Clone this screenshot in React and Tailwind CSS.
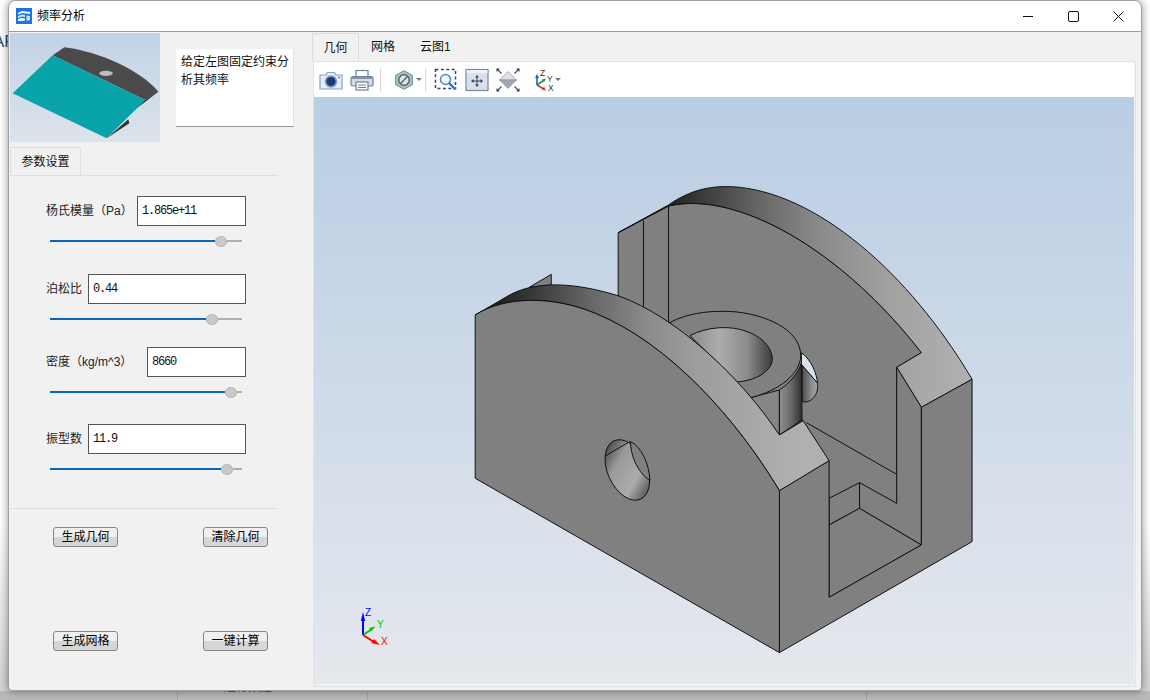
const cjk = "font-['Liberation_Sans','Noto_Sans_CJK_SC',sans-serif]";

const FIELDS = [
  { label: "杨氏模量（Pa）", value: "1.865e+11", input: "w-[109px]", fill: "w-[165px]", row: "mt-[20px]" },
  { label: "泊松比", value: "0.44", input: "w-[158px]", fill: "w-[156px]", row: "mt-[27px]" },
  { label: "密度（kg/m^3）", value: "8660", input: "w-[99px]", fill: "w-[175px]", row: "mt-[22px]" },
  { label: "振型数", value: "11.9", input: "w-[158px]", fill: "w-[171px]", row: "mt-[26px]" },
];

function Field({ label, value, input, fill, row }) {
  return (
    <div className={`${row} ml-[36px] w-[200px]`}>
      <div className="flex h-[30px] items-center justify-between">
        <span className="text-[12px] text-[#222]">{label}</span>
        <div className={`${input} flex h-[30px] items-center border border-[#555] bg-white pl-[4px] font-['Liberation_Mono',monospace] text-[12px] tracking-[-1.2px] text-[#111]`}>
          {value}
        </div>
      </div>
      <div className="ml-[4px] mt-[9px] flex h-[12px] w-[192px] items-center">
        <div className={`${fill} h-[2px] bg-[#0a67b5]`} />
        <div className="h-[11px] w-[12px] shrink-0 rounded-full border border-[#b4b4b4] bg-[#c9c9c9]" />
        <div className="h-[2px] flex-1 bg-[#b0b0b0]" />
      </div>
    </div>
  );
}

function PushButton({ children }) {
  return (
    <button className="h-[20px] w-[65px] rounded-[3px] border border-[#858585] bg-[linear-gradient(#f0f0f0_50%,#d6d6d6_50%)] text-center text-[12px] leading-[19px] text-black">
      {children}
    </button>
  );
}

function Thumbnail() {
  return (
    <svg viewBox="30 9 450 327" className="h-[109px] w-[150px] shrink-0">
      <defs>
        <linearGradient id="thumbSky" x1="0" y1="0" x2="0" y2="1">
          <stop offset="0" stopColor="#c2d3e6" />
          <stop offset="1" stopColor="#dce3ec" />
        </linearGradient>
      </defs>
      <rect x="30" y="9" width="450" height="327" fill="url(#thumbSky)" />
      <path d="M158 76 L193 52 C300 66 420 120 475 185 L436 210 Z" fill="#4a4a4a" />
      <path d="M38 190 L158 76 L436 210 L320 325 Z" fill="#08a4a9" />
      <ellipse cx="318" cy="130" rx="20" ry="8" fill="#bdbdbd" />
      <path d="M436 210 L475 185 L410 235 Z" fill="#222" />
      <path d="M320 325 L385 268 L388 280 Z" fill="#333" />
    </svg>
  );
}

function AppIcon() {
  return (
    <svg viewBox="0 0 16 16" className="h-[16px] w-[16px] shrink-0">
      <rect width="16" height="16" fill="#1a73e8" />
      <path d="M2 5 L6 3 L14 4 L14 6 L6 5 L2 6.5 Z" fill="#fff" />
      <path d="M2 8 L6 6.5 L9 7 L9 9 L6 8.5 L2 10 Z" fill="#dbe9fb" />
      <path d="M2 11 L6 10 L9 10.5 L9 12.5 L6 13 L2 13 Z" fill="#fff" />
      <path d="M10.5 7.5 L14 8 L14 12 L10.5 13 Z" fill="#cfe1fa" />
    </svg>
  );
}

function WindowButton({ children }) {
  return <div className="flex h-full w-[45px] items-center justify-center">{children}</div>;
}

function Camera() {
  return (
    <svg viewBox="0 0 24 24" className="h-[24px] w-[24px]">
      <path d="M1 7 H7 L8.5 4.5 H15.5 L17 7 H23 V21 H1 Z" fill="#e6edf6" stroke="#86a2c4" strokeWidth="1.2" strokeLinejoin="round" />
      <circle cx="12" cy="13.5" r="6.2" fill="#7b9cc4" />
      <circle cx="12" cy="13.5" r="4.6" fill="#1c3b75" />
      <circle cx="20" cy="9.5" r="0.9" fill="#5c7aa3" />
    </svg>
  );
}

function Printer() {
  return (
    <svg viewBox="0 0 24 24" className="h-[24px] w-[24px]">
      <rect x="6" y="2.5" width="12" height="7" fill="#fff" stroke="#6f8098" strokeWidth="1.2" />
      <rect x="1" y="8.5" width="22" height="9.5" rx="2" fill="#d5dce6" stroke="#6f8098" strokeWidth="1.2" />
      <rect x="1.6" y="9" width="20.8" height="2" fill="#8393a8" />
      <rect x="6" y="14" width="12" height="8" fill="#fff" stroke="#6f8098" strokeWidth="1.2" />
      <path d="M8 17 H16 M8 19.5 H16" stroke="#6f8098" strokeWidth="1" />
    </svg>
  );
}

function HexIcon() {
  return (
    <svg viewBox="0 0 18 20" className="h-[20px] w-[18px]">
      <path d="M9 0.7 L17.3 5.3 V14.7 L9 19.3 L0.7 14.7 V5.3 Z" fill="#a8c1c6" stroke="#6e8d93" />
      <circle cx="9" cy="10" r="5.2" fill="#dfe8ea" stroke="#55626a" strokeWidth="1.4" />
      <path d="M5.5 13.5 L12.5 6.5" stroke="#55626a" strokeWidth="1.4" />
    </svg>
  );
}

function ZoomBox() {
  return (
    <svg viewBox="0 0 24 24" className="h-[24px] w-[24px]">
      <rect x="1.5" y="1.5" width="20" height="19" fill="none" stroke="#33476b" strokeWidth="1.5" strokeDasharray="3 2.4" />
      <circle cx="11.5" cy="11.5" r="5" fill="#f3f8fd" stroke="#5c8fbe" strokeWidth="1.6" />
      <path d="M15 15 L21.5 21.5" stroke="#1f78c4" strokeWidth="2.4" />
    </svg>
  );
}

function FitView() {
  return (
    <svg viewBox="0 0 24 24" className="h-[24px] w-[24px]">
      <rect x="1" y="1.5" width="22" height="21" fill="#dbe1ea" stroke="#7788a2" strokeWidth="1.2" />
      <rect x="1.6" y="2" width="20.8" height="3" fill="#eef1f5" />
      <path d="M12 8 V18 M7 13 H17" stroke="#33445f" strokeWidth="1" />
      <path d="M12 7 L10 9.5 H14 Z M12 19 L10 16.5 H14 Z M6 13 L8.5 11 V15 Z M18 13 L15.5 11 V15 Z" fill="#33445f" />
    </svg>
  );
}

function Diamond() {
  return (
    <svg viewBox="0 0 24 24" className="h-[24px] w-[24px]">
      <path d="M12 3.5 L20.5 12 L3.5 12 Z" fill="#dfe1e5" stroke="#8a9099" strokeWidth="0.7" />
      <path d="M3.5 12 L20.5 12 L12 20.5 Z" fill="#a3a8b0" stroke="#8a9099" strokeWidth="0.7" />
      <path d="M1 1 L5.5 5.5 M23 1 L18.5 5.5 M1 23 L5.5 18.5 M23 23 L18.5 18.5" stroke="#44597c" strokeWidth="1.4" />
      <path d="M0.5 0.5 H4 L0.5 4 Z M23.5 0.5 H20 L23.5 4 Z M0.5 23.5 H4 L0.5 20 Z M23.5 23.5 H20 L23.5 20 Z" fill="#2d4367" />
    </svg>
  );
}

function AxisIcon() {
  return (
    <svg viewBox="0 0 20 24" className="h-[24px] w-[20px]">
      <path d="M3 17 V9" stroke="#2a5fb0" strokeWidth="1.6" />
      <path d="M3 6 L1 10 H5 Z" fill="#2a5fb0" />
      <path d="M3 17 L9.5 12.5" stroke="#1b9a4a" strokeWidth="1.6" />
      <path d="M12 10.5 L7.8 11.4 L10 14.4 Z" fill="#1b9a4a" />
      <path d="M3 17 L9.5 21" stroke="#e03030" strokeWidth="1.6" />
      <path d="M12 22.5 L10 18.6 L8 21.8 Z" fill="#e03030" />
      <text x="6" y="7.5" fontSize="8.5" fill="#333" fontFamily="Liberation Sans">Z</text>
      <text x="13" y="14" fontSize="8.5" fill="#333" fontFamily="Liberation Sans">Y</text>
      <text x="14" y="23" fontSize="8.5" fill="#333" fontFamily="Liberation Sans">X</text>
    </svg>
  );
}

function Caret() {
  return <span className="h-0 w-0 border-x-[3px] border-t-[3px] border-x-transparent border-t-[#777]" />;
}

function Model() {
  const line = { stroke: "#111", strokeWidth: 1, vectorEffect: "non-scaling-stroke" };
  const grey = "#808080";
  return (
    <svg viewBox="0 0 820 587" className="block h-full w-full">
      <defs>
        <linearGradient id="frontBand" gradientUnits="userSpaceOnUse" x1="120" y1="0" x2="1000" y2="0">
          <stop offset="0" stopColor="#222222" />
          <stop offset="0.12" stopColor="#3c3c3c" />
          <stop offset="0.3" stopColor="#666666" />
          <stop offset="0.5" stopColor="#8c8c8c" />
          <stop offset="0.65" stopColor="#9c9c9c" />
          <stop offset="1" stopColor="#b0b0b0" />
        </linearGradient>
        <linearGradient id="rearBand" gradientUnits="userSpaceOnUse" x1="620" y1="0" x2="1500" y2="0">
          <stop offset="0" stopColor="#222222" />
          <stop offset="0.15" stopColor="#444444" />
          <stop offset="0.3" stopColor="#666666" />
          <stop offset="0.5" stopColor="#8a8a8a" />
          <stop offset="0.75" stopColor="#a2a2a2" />
          <stop offset="1" stopColor="#b0b0b0" />
        </linearGradient>
        <linearGradient id="bore" gradientUnits="userSpaceOnUse" x1="680" y1="0" x2="925" y2="0">
          <stop offset="0" stopColor="#8a8a8a" />
          <stop offset="0.35" stopColor="#adadad" />
          <stop offset="0.7" stopColor="#8a8a8a" />
          <stop offset="1" stopColor="#3a3a3a" />
        </linearGradient>
        <linearGradient id="boss" gradientUnits="userSpaceOnUse" x1="945" y1="0" x2="1012" y2="0">
          <stop offset="0" stopColor="#909090" />
          <stop offset="0.5" stopColor="#6a6a6a" />
          <stop offset="1" stopColor="#2e2e2e" />
        </linearGradient>
        <linearGradient id="rearHole" gradientUnits="userSpaceOnUse" x1="1012" y1="0" x2="1060" y2="0">
          <stop offset="0" stopColor="#4a4a4a" />
          <stop offset="0.6" stopColor="#909090" />
          <stop offset="1" stopColor="#a8a8a8" />
        </linearGradient>
        <linearGradient id="frontHole" gradientUnits="userSpaceOnUse" x1="440" y1="820" x2="560" y2="985">
          <stop offset="0" stopColor="#3c3c3c" />
          <stop offset="0.3" stopColor="#9a9a9a" />
          <stop offset="0.65" stopColor="#acacac" />
          <stop offset="1" stopColor="#3c3c3c" />
        </linearGradient>
      </defs>

      {/* coordinates below come from a 3x crop of the part */}
      <g transform="translate(146 73) scale(0.338 0.3333)">
        {/* rear wall */}
        <path d="M468 188 L617 108 C820 60 1130 240 1365 548 L1292 592 L1292 1000 L1182 938 L1092 985 L1092 872 L1015 752 L945 795 L620 458 L468 378 Z" fill={grey} style={line} />
        <path d="M543 152 V410 M617 108 V458" fill="none" style={line} />
        <path d="M468 188 L617 105 C680 60 740 48 800 50 C1050 60 1330 310 1515 628 L1365 712 L1292 592 L1365 548 C1130 240 820 60 617 108 Z" fill="url(#rearBand)" style={line} />

        {/* bore through the rear wall */}
        <path d="M1010 548 C1040 570 1055 610 1058 640 L1010 585 Z" fill="#d6e1ec" style={line} />
        <path d="M1012 585 L1058 640 C1062 672 1040 702 1012 695 Z" fill="url(#rearHole)" style={line} />

        {/* boss */}
        <path d="M860 683 L945 660 L945 795 Z" fill="#868686" style={line} />
        <path d="M945 660 C975 640 1000 610 1010 580 L1012 750 L945 795 Z" fill="url(#boss)" style={line} />
        <path d="M620 458 C680 425 760 420 820 426 C930 440 1010 490 1008 560 C1005 610 950 660 860 683 Z" fill={grey} style={line} />
        <path d="M680 497 C730 470 800 465 850 485 C905 505 935 550 920 585 C900 620 860 632 820 636 Z" fill="url(#bore)" style={line} />

        {/* slot */}
        <path d="M1015 752 L1292 912 L1292 1000 L1182 938 L1092 985 L1092 872 Z" fill={grey} />
        <path d="M1025 758 L1290 912" fill="none" style={line} />
        <path d="M1092 985 L1182 938 L1182 1015 L1092 1065 Z" fill={grey} style={line} />
        <path d="M1182 938 L1292 1000 V592 L1365 712 V1125 L1182 1015 Z" fill={grey} style={line} />
        <path d="M1092 1065 L1182 1015 L1365 1125 L1092 1282 Z" fill={grey} style={line} />

        {/* end face */}
        <path d="M1365 712 L1515 628 V1115 L945 1448 V962 L1092 872 V1282 L1365 1125 Z" fill={grey} style={line} />

        {/* small tab behind the front arc */}
        <path d="M205 352 L270 313 V345 Z" fill={grey} style={line} />

        {/* front band and face */}
        <path d="M45 435 L130 385 C220 325 350 340 470 378 C640 440 830 620 945 795 L1015 752 L1092 872 L945 962 C820 750 620 520 400 430 C270 375 130 380 45 435 Z" fill="url(#frontBand)" style={line} />
        <path d="M45 435 C130 380 270 375 400 430 C620 520 820 750 945 962 V1448 L45 925 Z" fill={grey} style={line} />

        {/* front hole */}
        <ellipse cx="495" cy="900" rx="58" ry="96" transform="rotate(-24 495 900)" fill="url(#frontHole)" style={line} />
        <path d="M430 858 L502 815" fill="none" style={line} />
        <path d="M505 828 C510 875 535 915 562 932 C560 880 535 830 505 815 Z" fill={grey} style={line} />
      </g>

      {/* axis triad, bottom left of the view */}
      <g>
        <path d="M49 538 V520" stroke="#0000ff" strokeWidth="2" />
        <path d="M49 515 L46.8 524 H51.2 Z" fill="#0000ff" />
        <path d="M49 538 L58 532" stroke="#00c800" strokeWidth="2" />
        <path d="M61.5 529.5 L55 531 L57.5 534 Z" fill="#00c800" />
        <path d="M49 538 L60 545" stroke="#ff0000" strokeWidth="2" />
        <path d="M66 548 L60 542 L57.5 546 Z" fill="#ff0000" />
        <text x="51" y="519" fontSize="10" fill="#0000ff" fontFamily="Liberation Sans">Z</text>
        <text x="63" y="531" fontSize="10" fill="#00c800" fontFamily="Liberation Sans">Y</text>
        <text x="67" y="548" fontSize="10" fill="#ff0000" fontFamily="Liberation Sans">X</text>
      </g>
    </svg>
  );
}

export default function App() {
  return (
    <div className={`${cjk} relative flex h-[700px] w-[1150px] flex-col overflow-hidden bg-[linear-gradient(#ffffff_75%,#d0d0d0_100%)]`}>
      {/* bits of the window behind this one */}
      <span className="absolute left-[-7px] top-[29px] text-[17px] text-[#2b4a73]">AF</span>

      <div className="relative z-10 h-[691px] px-[8px]">
        <div className="flex h-full w-[1134px] flex-col overflow-hidden rounded-t-[8px] rounded-b-[4px] border border-[#a0a0a0] bg-[#f1f1f1] shadow-[0_0_8px_rgba(0,0,0,0.45)]">
          <div className="flex h-[31px] shrink-0 items-center justify-between border-b border-[#9c9c9c] bg-white">
            <div className="ml-[7px] flex items-center gap-[5px] text-[12px] text-black">
              <AppIcon />
              频率分析
            </div>
            <div className="flex h-full">
              <WindowButton>
                <svg width="11" height="11" viewBox="0 0 11 11"><path d="M0 5.5 H10" stroke="#111" /></svg>
              </WindowButton>
              <WindowButton>
                <svg width="11" height="11" viewBox="0 0 11 11"><rect x="0.5" y="0.5" width="10" height="10" rx="1.5" fill="none" stroke="#111" /></svg>
              </WindowButton>
              <WindowButton>
                <svg width="11" height="11" viewBox="0 0 11 11"><path d="M0.5 0.5 L10.5 10.5 M10.5 0.5 L0.5 10.5" stroke="#111" /></svg>
              </WindowButton>
            </div>
          </div>

          <div className="flex flex-1 pt-[1px]">
            <div className="w-[303px] shrink-0 pl-[1px]">
              <div className="flex">
                <Thumbnail />
                <div className="ml-[16px] mt-[16px] h-[78px] w-[118px] border-b border-r border-b-[#999] border-r-[#e2e2e2] bg-white pl-[5px] pr-[4px] pt-[4px] text-[12px] leading-[18px] text-[#111]">
                  给定左图固定约束分析其频率
                </div>
              </div>
              <div className="mt-[5px] flex h-[28px] w-[71px] items-center justify-center border border-b-0 border-[#dfdfdf] text-[12px] text-[#111]">
                参数设置
              </div>
              <div className="h-[334px] w-[268px] border-y border-[#dfdfdf]">
                {FIELDS.map((f) => (
                  <Field key={f.label} {...f} />
                ))}
              </div>
              <div className="ml-[43px] mt-[18px] grid grid-cols-[65px_65px] gap-x-[85px] gap-y-[84px]">
                <PushButton>生成几何</PushButton>
                <PushButton>清除几何</PushButton>
                <PushButton>生成网格</PushButton>
                <PushButton>一键计算</PushButton>
              </div>
            </div>

            <div className="flex flex-col">
              <div className="flex h-[28px] text-[12px] text-[#111]">
                <div className="flex w-[47px] items-center justify-center border border-b-0 border-[#dcdcdc]">几何</div>
                <div className="flex items-center px-[12px]">网格</div>
                <div className="ml-[1px] flex items-center px-[12px]">云图1</div>
              </div>
              <div className="ml-[1px] flex h-[626px] w-[823px] flex-col border border-[#e3e3e3]">
                <div className="flex h-[35px] w-[820px] shrink-0 items-center bg-white pl-[5px]">
                  <Camera />
                  <div className="ml-[7px]"><Printer /></div>
                  <div className="ml-[6px] h-[24px] w-px bg-[#d8d8d8]" />
                  <div className="ml-[14px] flex"><HexIcon /></div>
                  <div className="ml-[3px] flex"><Caret /></div>
                  <div className="ml-[3px] h-[24px] w-px bg-[#d8d8d8]" />
                  <div className="ml-[8px] flex"><ZoomBox /></div>
                  <div className="ml-[7px] flex"><FitView /></div>
                  <div className="ml-[7px] flex"><Diamond /></div>
                  <div className="ml-[14px] flex"><AxisIcon /></div>
                  <div className="ml-[1px] flex"><Caret /></div>
                </div>
                <div className="h-[587px] w-[820px] bg-gradient-to-b from-[#b9cde4] to-[#e5e8ed]">
                  <Model />
                </div>
              </div>
            </div>
          </div>
        </div>
      </div>

      <div className="flex h-[9px] bg-[#b9b9b9]">
        <div className="w-[178px] border-r border-[#a4a4a4]" />
        <div className="w-[190px] overflow-hidden border-r border-[#a4a4a4] pl-[46px]">
          <div className="mt-[-11px] text-[12px] leading-[14px] text-[#444]">运行数据 ▾</div>
        </div>
        <div className="w-[499px] border-r border-[#a4a4a4]" />
      </div>
    </div>
  );
}
